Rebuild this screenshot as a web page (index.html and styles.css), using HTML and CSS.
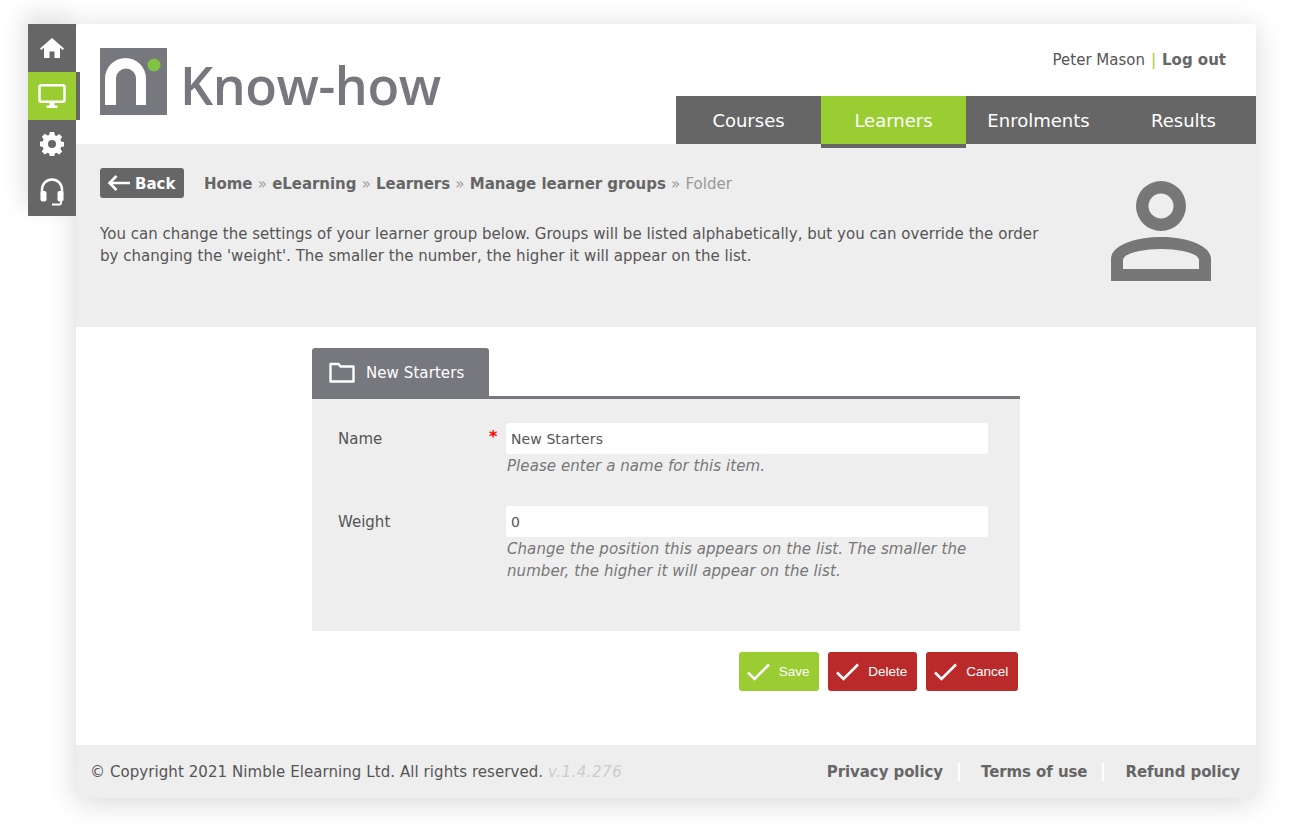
FILE: index.html
```html
<!DOCTYPE html>
<html lang="en">
<head>
<meta charset="utf-8">
<title>Know-how</title>
<link rel="stylesheet" href="styles.css">
</head>
<body>
<div class="app">
  <nav class="side">
    <a class="side-item"><svg width="24" height="20" viewBox="0 0 24 20"><path fill="#fff" d="M12 0 0 10.500l1.300 1.500L4 9.700V20h5.500v-6.500h5V20H20V9.700l2.700 2.300 1.300-1.500z"/></svg></a>
    <a class="side-item active"><svg width="28" height="24" viewBox="0 0 28 24"><rect x="1.500" y="1.250" width="25" height="16.500" rx="1.500" fill="none" stroke="#fff" stroke-width="2.500"/><path fill="#fff" d="M11.500 19h5v2.500h3V24h-11v-2.500h3z"/></svg></a>
    <a class="side-item"><svg width="24" height="24" viewBox="0 0 24 24"><path fill="#fff" fill-rule="evenodd" d="M9.800 0h4.400l.6 3.200 1.700.7 2.700-1.800 3 3-1.800 2.700.7 1.700 2.900.6v4.400l-2.900.6-.7 1.700 1.800 2.700-3 3-2.700-1.800-1.700.7-.6 3.200H9.800l-.6-3.200-1.700-.7-2.700 1.800-3-3 1.800-2.700-.7-1.700L0 14.200V9.800l2.900-.6.7-1.700-1.800-2.700 3-3 2.700 1.800 1.700-.7zM12 8a4 4 0 1 0 0 8 4 4 0 0 0 0-8z"/></svg></a>
    <a class="side-item"><svg width="24" height="28" viewBox="0 0 24 28"><path fill="none" stroke="#fff" stroke-width="2.500" d="M2 17v-5.500a10 10 0 0 1 20 0V17"/><rect x=".5" y="13" width="6" height="10.500" rx="2" fill="#fff"/><rect x="17.500" y="13" width="6" height="10.500" rx="2" fill="#fff"/><path fill="none" stroke="#fff" stroke-width="1.800" d="M21 23v2a1.500 1.500 0 0 1-1.500 1.500H12"/></svg></a>
  </nav>
  <div class="card">
    <header class="top">
      <div class="brand">
        <svg class="brand-mark" width="67" height="67" viewBox="0 0 67 67"><rect width="67" height="67" fill="#77787e"/><path fill="#fff" d="M5 57V30.500A20.500 20.500 0 0 1 46 30.500V57H36V30.500a10 10 0 0 0-20 0V57z"/><circle cx="54" cy="17" r="6.500" fill="#7fc241"/></svg>
        <span class="brand-name">Know-how</span>
      </div>
      <div class="top-right">
        <div class="user"><span>Peter Mason</span><span class="pipe">|</span><a class="logout">Log out</a></div>
        <ul class="tabs">
          <li class="tab">Courses</li>
          <li class="tab current">Learners</li>
          <li class="tab">Enrolments</li>
          <li class="tab">Results</li>
        </ul>
      </div>
    </header>
    <section class="intro">
      <div class="intro-text">
        <div class="crumbs">
          <a class="back"><svg width="23" height="16" viewBox="0 0 23 16"><path fill="none" stroke="#fff" stroke-width="2.500" d="M23 8H2.500M9.500 1 2.500 8l7 7"/></svg><span class="back-label">Back</span></a>
          <span class="trail"><b>Home</b><i>»</i><b>eLearning</b><i>»</i><b>Learners</b><i>»</i><b>Manage learner groups</b><i>»</i><span>Folder</span></span>
        </div>
        <p class="lead">You can change the settings of your learner group below. Groups will be listed alphabetically, but you can override the order by changing the 'weight'. The smaller the number, the higher it will appear on the list.</p>
      </div>
      <svg class="intro-icon" width="100" height="100" viewBox="0 0 100 100"><path fill="#777" fill-rule="evenodd" d="M50 0a25 25 0 1 1 0 50 25 25 0 0 1 0-50zm0 12.500a12.500 12.500 0 1 0 0 25 12.500 12.500 0 0 0 0-25zM0 100V78C0 64 25 56 50 56s50 8 50 22v22zM12 88h76v-9c0-6-17-11-38-11s-38 5-38 11z"/></svg>
    </section>
    <main class="content">
      <div class="form-wrap">
        <div class="form-tab"><svg width="26" height="21" viewBox="0 0 26 21"><path fill="none" stroke="#fff" stroke-width="2.400" stroke-linejoin="round" d="M1.500 19.500V2h8l2 2.500H24.500v15z"/></svg><span class="form-tab-label">New Starters</span></div>
        <form class="panel">
          <div class="field">
            <label class="label">Name</label><span class="req">*</span>
            <div class="control"><div class="input">New Starters</div><div class="hint">Please enter a name for this item.</div></div>
          </div>
          <div class="field">
            <label class="label">Weight</label><span class="req"></span>
            <div class="control"><div class="input">0</div><div class="hint">Change the position this appears on the list. The smaller the number, the higher it will appear on the list.</div></div>
          </div>
        </form>
        <div class="actions">
          <a class="btn ok"><svg width="23" height="18" viewBox="0 0 23 18"><path fill="none" stroke="#fff" stroke-width="2.500" d="M1 9.500 7.500 16 22 1.500"/></svg><span>Save</span></a>
          <a class="btn no"><svg width="23" height="18" viewBox="0 0 23 18"><path fill="none" stroke="#fff" stroke-width="2.500" d="M1 9.500 7.500 16 22 1.500"/></svg><span>Delete</span></a>
          <a class="btn no"><svg width="23" height="18" viewBox="0 0 23 18"><path fill="none" stroke="#fff" stroke-width="2.500" d="M1 9.500 7.500 16 22 1.500"/></svg><span>Cancel</span></a>
        </div>
      </div>
    </main>
    <footer class="foot">
      <div class="copy">© Copyright 2021 Nimble Elearning Ltd. All rights reserved. <em>v.1.4.276</em></div>
      <div class="links"><a>Privacy policy</a><a>Terms of use</a><a>Refund policy</a></div>
    </footer>
  </div>
</div>
</body>
</html>
```
FILE: styles.css
```css
* { box-sizing: border-box; }
html, body { margin: 0; height: 100%; background: #fff; }
body { font-family: "DejaVu Sans", Verdana, sans-serif; color: #555; font-size: 15px; overflow: hidden; }
a { color: inherit; text-decoration: none; }
.app { display: flex; align-items: flex-start; padding: 24px 0 0 28px; }

.side { width: 48px; flex: none; display: flex; flex-direction: column; box-shadow: -4px -10px 24px rgba(0,0,0,.12); }
.side-item { position: relative; height: 48px; background: #666; display: flex; align-items: center; justify-content: center; }
.side-item.active { background: #9acd32; }
.side-item.active::after { content: ""; position: absolute; top: 0; bottom: 0; left: 48px; width: 4px; background: #666; }

.card { width: 1180px; height: 774px; flex: none; display: flex; flex-direction: column; background: #fff; border-radius: 4px; box-shadow: 0 4px 30px rgba(0,0,0,.16); overflow: hidden; }

.top { height: 120px; flex: none; display: flex; justify-content: space-between; }
.brand { display: flex; align-items: flex-start; padding: 24px 0 0 24px; }
.brand-mark { flex: none; }
.brand-name { font-family: "Open Sans", sans-serif; font-weight: 600; font-size: 52px; line-height: 73px; letter-spacing: -.45px; color: #77787e; margin-left: 13px; }
.top-right { width: 580px; display: flex; flex-direction: column; justify-content: space-between; }
.user { text-align: right; padding: 27px 30px 0 0; line-height: 18px; color: #555; }
.pipe { color: #9acd32; margin: 0 6px; }
.logout { font-weight: 700; color: #666; }
.tabs { list-style: none; margin: 0; padding: 0; display: flex; height: 48px; background: #666; position: relative; }
.tab { width: 145px; text-align: center; color: #fff; font-size: 18px; line-height: 49px; }
.tab.current { background: #9acd32; position: relative; }
.tab.current::after { content: ""; position: absolute; left: 0; right: 0; top: 48px; height: 4px; background: #666; z-index: 1; }

.intro { height: 183px; flex: none; background: #eee; padding: 24px 45px 0 24px; display: flex; justify-content: space-between; align-items: flex-start; }
.intro-text { width: 950px; }
.crumbs { display: flex; align-items: center; height: 30px; }
.back { width: 84px; height: 30px; background: #666; border-radius: 3px; color: #fff; font-weight: 700; display: flex; align-items: center; gap: 5px; padding-left: 7px; }
.back-label { padding-top: 2px; }
.trail { margin-left: 20px; padding-top: 2px; color: #999; }
.trail b { color: #666; letter-spacing: -.05px; }
.trail i { font-style: normal; margin: 0 5.250px; }
.lead { margin: 25px 0 0; line-height: 22px; color: #555; letter-spacing: .03px; }
.intro-icon { margin-top: 13px; flex: none; }

.content { flex: 1; display: flex; justify-content: center; padding: 21px 0 0 0; }
.form-wrap { width: 708px; }
.form-tab { width: 177px; height: 48px; background: #77787e; border-radius: 3px 3px 0 0; color: #fff; display: flex; align-items: center; gap: 11px; padding-left: 17px; }
.form-tab-label { padding-top: 2px; letter-spacing: .08px; }
.panel { height: 235px; background: #eee; border-top: 3px solid #77787e; padding: 24px 32px 0 26px; }
.field { display: flex; margin-bottom: 29px; }
.label { width: 151px; line-height: 33px; }
.req { width: 17px; color: #f00; font-weight: 700; font-size: 16px; line-height: 28px; }
.control { flex: 1; }
.input { height: 31px; background: #fff; border-radius: 3px; padding: 0 5px; font-size: 14px; line-height: 33px; letter-spacing: .1px; }
.hint { font-style: italic; color: #777; line-height: 22px; padding: 1px 1px 0; letter-spacing: .07px; }
.actions { display: flex; justify-content: flex-end; gap: 9px; padding: 21px 2px 0 0; }
.btn { height: 39px; border-radius: 3px; color: #fff; font-family: "Liberation Sans", Arial, sans-serif; font-size: 13.500px; display: flex; align-items: center; padding: 0 9.800px 0 8px; gap: 9px; }
.btn.ok { background: #9acd32; }
.btn.no { background: #bb2a2a; }

.foot { margin-top: auto; height: 53px; flex: none; background: #eee; display: flex; justify-content: space-between; align-items: center; padding: 0 16px 0 14px; }
.copy { letter-spacing: .07px; }
.copy em { color: #ccc; letter-spacing: .5px; }
.links { display: flex; font-weight: 700; color: #666; letter-spacing: -.08px; }
.links a { padding: 0 15px 0 21px; border-right: 2px solid #fff; line-height: 18px; }
.links a:first-child { padding-left: 0; }
.links a:last-child { padding-right: 0; border-right: 0; }
```
